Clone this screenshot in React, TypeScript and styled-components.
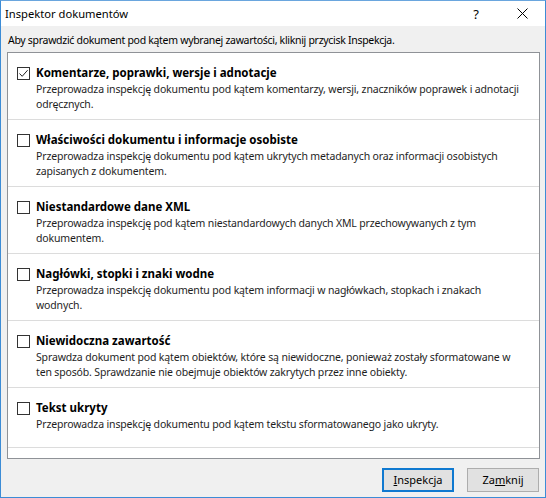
import styled, { createGlobalStyle } from "styled-components";

/* ── Global ──────────────────────────────────────────── */

const GlobalStyle = createGlobalStyle`
  html, body {
    margin: 0;
    padding: 0;
    background: #ffffff;
  }
  * { box-sizing: border-box; }
`;

const FONT = `"Noto Sans", "Open Sans", "DejaVu Sans", sans-serif`;

/* ── Window chrome ───────────────────────────────────── */

const Window = styled.div`
  width: 546px;
  height: 498px;
  display: flex;
  flex-direction: column;
  background: #f0f0f0;
  border: 1px solid #3c8cd6;
  border-top-color: #6aa6de;
  font-family: ${FONT};
  font-size: 10.5px;
  letter-spacing: -0.15px;
  color: #000;
`;

const TitleBar = styled.div`
  height: 25px;
  flex-shrink: 0;
  display: flex;
  align-items: center;
  background: #ffffff;
  padding-left: 4px;
`;

const TitleText = styled.span`
  flex: 1;
  font-size: 11.2px;
  letter-spacing: 0;
  color: #000;
`;

const CaptionButton = styled.div`
  width: 46px;
  height: 25px;
  display: flex;
  align-items: center;
  justify-content: center;
  font-size: 13px;
  color: #000;
`;

/* ── Body ────────────────────────────────────────────── */

const Body = styled.div`
  flex: 1;
  display: flex;
  flex-direction: column;
  padding: 6px 5px 0 6px;
`;

const Intro = styled.p`
  margin: 0 0 4px 1px;
  line-height: 16px;
  letter-spacing: -0.3px;
  white-space: nowrap;
`;

const Panel = styled.div`
  height: 407px;
  background: #ffffff;
  border: 1px solid #8f9297;
  display: flex;
  flex-direction: column;
`;

const Item = styled.div`
  display: grid;
  grid-template-columns: 13px 1fr;
  column-gap: 6px;
  padding: 12px 8px 7px 9px;
  border-bottom: 1px solid #dcdcdc;
`;

const Box = styled.span`
  width: 13px;
  height: 13px;
  margin-top: 2px;
  border: 1px solid #333333;
  background: #ffffff;
  display: flex;
  align-items: center;
  justify-content: center;
`;

const ItemTitle = styled.div`
  font-size: 11.5px;
  font-weight: 700;
  letter-spacing: 0;
  line-height: 16px;
  white-space: nowrap;
`;

const ItemDesc = styled.div`
  grid-column: 2;
  margin-top: 1px;
  min-height: 23px;
  line-height: 15px;
  color: #1e1e1e;
`;

const DescLine = styled.div`
  white-space: nowrap;
`;

/* ── Footer ──────────────────────────────────────────── */

const Footer = styled.div`
  flex: 1;
  display: flex;
  align-items: center;
  justify-content: flex-end;
  gap: 13px;
  padding: 3px 1px 0 0;
`;

const DialogButton = styled.button<{ $default?: boolean }>`
  width: 72px;
  height: 24px;
  padding: 0;
  font-family: ${FONT};
  font-size: 11px;
  color: #000;
  background: #e1e1e1;
  border: ${(p) => (p.$default ? "2px solid #0f79d0" : "1px solid #adadad")};
  u { text-decoration: underline; }
`;

/* ── Data ────────────────────────────────────────────── */

interface Check {
  title: string;
  lines: string[];
  checked?: boolean;
}

const CHECKS: Check[] = [
  {
    title: "Komentarze, poprawki, wersje i adnotacje",
    checked: true,
    lines: [
      "Przeprowadza inspekcję dokumentu pod kątem komentarzy, wersji, znaczników poprawek i adnotacji",
      "odręcznych.",
    ],
  },
  {
    title: "Właściwości dokumentu i informacje osobiste",
    lines: [
      "Przeprowadza inspekcję dokumentu pod kątem ukrytych metadanych oraz informacji osobistych",
      "zapisanych z dokumentem.",
    ],
  },
  {
    title: "Niestandardowe dane XML",
    lines: [
      "Przeprowadza inspekcję pod kątem niestandardowych danych XML przechowywanych z tym",
      "dokumentem.",
    ],
  },
  {
    title: "Nagłówki, stopki i znaki wodne",
    lines: [
      "Przeprowadza inspekcję dokumentu pod kątem informacji w nagłówkach, stopkach i znakach",
      "wodnych.",
    ],
  },
  {
    title: "Niewidoczna zawartość",
    lines: [
      "Sprawdza dokument pod kątem obiektów, które są niewidoczne, ponieważ zostały sformatowane w",
      "ten sposób. Sprawdzanie nie obejmuje obiektów zakrytych przez inne obiekty.",
    ],
  },
  {
    title: "Tekst ukryty",
    lines: ["Przeprowadza inspekcję dokumentu pod kątem tekstu sformatowanego jako ukryty."],
  },
];

/* ── Page ────────────────────────────────────────────── */

export default function App() {
  return (
    <>
      <GlobalStyle />
      <Window>
        <TitleBar>
          <TitleText>Inspektor dokumentów</TitleText>
          <CaptionButton>?</CaptionButton>
          <CaptionButton>
            <svg width="11" height="11" viewBox="0 0 11 11">
              <path d="M0.5 0.5 L10.5 10.5 M10.5 0.5 L0.5 10.5" stroke="#000" strokeWidth="1" />
            </svg>
          </CaptionButton>
        </TitleBar>

        <Body>
          <Intro>Aby sprawdzić dokument pod kątem wybranej zawartości, kliknij przycisk Inspekcja.</Intro>

          <Panel>
            {CHECKS.map((c) => (
              <Item key={c.title}>
                <Box>
                  {c.checked && (
                    <svg width="11" height="11" viewBox="0 0 11 11">
                      <path d="M1.5 5.5 L4.2 8.3 L9.6 2.2" fill="none" stroke="#222" strokeWidth="1" />
                    </svg>
                  )}
                </Box>
                <ItemTitle>{c.title}</ItemTitle>
                <ItemDesc>
                  {c.lines.map((l) => (
                    <DescLine key={l}>{l}</DescLine>
                  ))}
                </ItemDesc>
              </Item>
            ))}
          </Panel>

          <Footer>
            <DialogButton $default>
              <u>I</u>nspekcja
            </DialogButton>
            <DialogButton>
              Za<u>m</u>knij
            </DialogButton>
          </Footer>
        </Body>
      </Window>
    </>
  );
}
